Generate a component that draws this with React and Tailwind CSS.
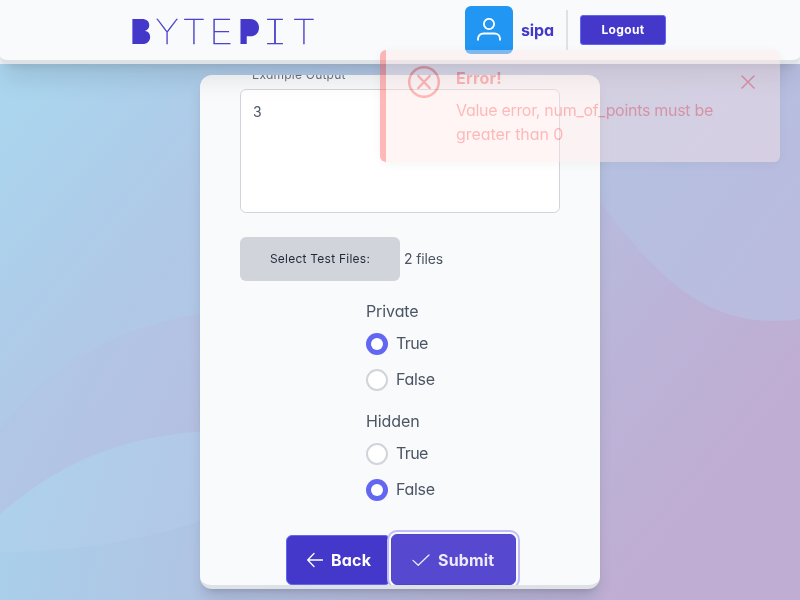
const inter = "font-['Inter',sans-serif] [font-feature-settings:'cv02','cv03','cv04','cv11']";

function Backdrop() {
  return (
    <svg className="absolute left-0 top-16 h-[536px] w-[800px]" viewBox="0 64 800 536" aria-hidden="true">
      <defs>
        <linearGradient id="base" gradientUnits="userSpaceOnUse" x1="20" y1="100" x2="620" y2="600">
          <stop offset="0" stopColor="#abd5ee" />
          <stop offset="0.14" stopColor="#adceea" />
          <stop offset="0.25" stopColor="#b0c9e7" />
          <stop offset="0.42" stopColor="#b2c6e6" />
          <stop offset="0.8" stopColor="#bbb4d8" />
          <stop offset="1" stopColor="#c0add3" />
        </linearGradient>
        <linearGradient id="band" gradientUnits="userSpaceOnUse" x1="40" y1="360" x2="200" y2="430">
          <stop offset="0" stopColor="#b2c5e4" />
          <stop offset="1" stopColor="#b6bddf" />
        </linearGradient>
        <linearGradient id="left" gradientUnits="userSpaceOnUse" x1="0" y1="480" x2="210" y2="540">
          <stop offset="0" stopColor="#aed1eb" />
          <stop offset="1" stopColor="#b3c7e7" />
        </linearGradient>
        <linearGradient id="low" gradientUnits="userSpaceOnUse" x1="0" y1="560" x2="210" y2="600">
          <stop offset="0" stopColor="#a9cfea" />
          <stop offset="1" stopColor="#b1c3e3" />
        </linearGradient>
        <linearGradient id="foot" gradientUnits="userSpaceOnUse" x1="200" y1="0" x2="600" y2="0">
          <stop offset="0" stopColor="#b1c3e3" />
          <stop offset="1" stopColor="#bbb1d6" />
        </linearGradient>
        <linearGradient id="right" gradientUnits="userSpaceOnUse" x1="600" y1="150" x2="800" y2="300">
          <stop offset="0" stopColor="#b5c0e0" />
          <stop offset="1" stopColor="#babbdf" />
        </linearGradient>
        <linearGradient id="top" gradientUnits="userSpaceOnUse" x1="200" y1="0" x2="600" y2="0">
          <stop offset="0" stopColor="#afcdea" />
          <stop offset="1" stopColor="#b5c0e0" />
        </linearGradient>
      </defs>
      <rect y="64" width="800" height="536" fill="url(#base)" />
      <path d="M0 430C45 370 110 325 210 313V600H0Z" fill="url(#band)" opacity="0.65" />
      <rect x="200" y="64" width="400" height="60" fill="url(#top)" />
      <path d="M590 64V190L600 202C660 280 710 332 800 319V64Z" fill="url(#right)" />
      <path d="M0 514C65 458 130 435 210 431V600H0Z" fill="url(#left)" />
      <path d="M0 552C70 552 140 542 210 518V600H0Z" fill="url(#low)" />
      <rect x="200" y="570" width="400" height="30" fill="url(#foot)" />
    </svg>
  );
}

function Thin({ children, className }) {
  return <span className={`flex justify-center font-thin [-webkit-text-stroke:0.35px_#4338ca] ${className}`}>{children}</span>;
}

function Logo() {
  return (
    <div className="ml-[131px] mt-[5px] flex h-[61px] w-[184px] items-center text-[34.5px] leading-none text-[#4338ca] [font-feature-settings:'ss02','cv08']">
      <span className="relative w-[21px] origin-left scale-x-[0.86] font-black">
        B
        <span className="absolute left-[7px] top-[9px] h-[17px] w-[9px] bg-[#4338ca]" />
      </span>
      <Thin className="ml-[5px] w-[20px] scale-x-105">Y</Thin>
      <Thin className="ml-[7px] w-[20px] scale-x-[1.12]">T</Thin>
      <Thin className="ml-[8px] w-[18px] scale-x-[1.2]">E</Thin>
      <span className="relative ml-[9px] w-[20px] origin-left scale-x-[0.92] font-black">
        P
        <span className="absolute left-[7px] top-[9px] h-[9px] w-[9px] bg-[#4338ca]" />
      </span>
      <Thin className="ml-[8px] w-[16px] scale-x-[1.7]">I</Thin>
      <Thin className="ml-[11px] w-[20px] scale-x-[1.12]">T</Thin>
    </div>
  );
}

function Header() {
  return (
    <header className="relative z-10 flex h-16 items-center rounded-b-lg border-b-4 border-[#dee2e6] bg-[#f8fafc] shadow-[0_20px_25px_-5px_rgba(0,0,0,0.1),0_8px_10px_-6px_rgba(0,0,0,0.1)] will-change-transform">
      <Logo />
      <div className="ml-[150px] flex h-12 w-12 items-center justify-center rounded-md bg-[#2196f3]">
        <svg viewBox="0 0 24 24" className="h-6 w-6" fill="none" stroke="#fff" strokeWidth="1.9" strokeLinecap="round">
          <circle cx="12" cy="6" r="5.1" />
          <path d="M1 21.8v-1c0-3.1 2.4-5.3 5.6-5.3h10.8c3.2 0 5.6 2.2 5.6 5.3v1" />
        </svg>
      </div>
      <span className="ml-2 w-[33px] text-base font-bold tracking-[-0.15px] text-[#4338ca]">sipa</span>
      <div className="ml-3 h-10 w-0.5 bg-[#dee2e6]" />
      <button className="ml-3 h-[30px] w-[86px] rounded-[3px] border border-[#6366f1] bg-[#4338ca] text-xs font-bold tracking-[0.35px] text-white">Logout</button>
    </header>
  );
}

function Option({ label, checked }) {
  return (
    <label className="flex h-[22px] items-center gap-2">
      <span className={checked
        ? "flex h-[22px] w-[22px] shrink-0 items-center justify-center rounded-full bg-[#6366f1]"
        : "h-[22px] w-[22px] shrink-0 rounded-full border-2 border-[#d1d5db] bg-white"}>
        {checked && <span className="h-3 w-3 rounded-full bg-white" />}
      </span>
      <span className={label === "True" ? "-mt-0.5 tracking-[-0.6px]" : "-mt-0.5 tracking-[-0.3px]"}>{label}</span>
    </label>
  );
}

function RadioGroup({ title, value }) {
  return (
    <div className="flex w-[68px] flex-col">
      <span className="h-6 leading-6 tracking-[-0.1px]">{title}</span>
      <div className="mt-[10px] flex flex-col gap-[14px]">
        <Option label="True" checked={value} />
        <Option label="False" checked={!value} />
      </div>
    </div>
  );
}

function FormCard() {
  return (
    <main className="mx-auto mt-[11px] h-[514px] w-[400px] overflow-hidden rounded-xl border-b-4 border-[#dee2e6] bg-[#f8fafc] px-10 text-base text-[#4b5563] shadow-[0_10px_15px_-3px_rgba(0,0,0,0.15),0_4px_6px_-4px_rgba(0,0,0,0.15)] will-change-transform">
      <div className="-mt-2 h-[22px] pl-3 text-xs leading-4 tracking-[0.22px] text-[#6b7280]">Example Output</div>
      <div className="h-[124px] rounded-md border border-[#d1d5db] bg-white px-3 py-3 text-sm leading-5">3</div>
      <div className="mt-6 flex h-11 items-center rounded-md bg-[#f9fafb]">
        <span className="flex h-11 w-40 items-center justify-center rounded-md bg-[#d1d5db] text-xs tracking-[0.24px] text-[#1f2937]">Select Test Files:</span>
        <span className="ml-1 text-sm tracking-[-0.15px]">2 files</span>
      </div>
      <div className="mt-[18px] flex flex-col items-center gap-[18px]">
        <RadioGroup title="Private" value={true} />
        <RadioGroup title="Hidden" value={false} />
      </div>
      <div className="ml-[46px] mt-[33px] flex w-[230px] items-start font-bold text-white">
        <button className="mt-px flex h-[50px] w-[105px] shrink-0 items-center rounded-md border border-[#6366f1] bg-[#4338ca] pl-5 tracking-[0.2px]">
          <svg viewBox="0 0 16 16" className="mr-2 h-4 w-4" fill="none" stroke="currentColor" strokeWidth="1.3" strokeLinecap="round" strokeLinejoin="round"><path d="M15.5 8H.7M7 1.5L.7 8L7 14.5" /></svg>
          Back
        </button>
        <button className="relative flex h-[51px] w-[125px] shrink-0 items-center rounded-md border border-[#4f46ce] bg-[#5649cf] pl-5 tracking-[0.15px] text-[#eeeafb] shadow-[0_0_0_2px_#f8fafc,0_0_0_4px_#c1bcfa]">
          <svg viewBox="0 0 18 16" className="mr-2 h-4 w-[18px]" fill="none" stroke="currentColor" strokeWidth="1.3" strokeLinecap="round" strokeLinejoin="round"><path d="M1 8.4L6.2 13.3L17 3" /></svg>
          Submit
        </button>
      </div>
    </main>
  );
}

function Toast() {
  return (
    <aside className="absolute left-[380px] top-[50px] z-20 flex h-28 w-[400px] rounded-md border-l-[6px] border-[#ff5757] bg-[#ffe7e6] px-[22px] py-4 text-base text-[#ff5757] opacity-[0.42] shadow-[0_2px_12px_rgba(0,0,0,0.1)]">
      <svg viewBox="0 0 32 32" className="h-8 w-8 shrink-0" fill="none" stroke="currentColor" strokeWidth="2.5" strokeLinecap="round">
        <circle cx="16" cy="16" r="14.8" /><path d="M10.3 10L21.7 22M21.7 10L10.3 22" />
      </svg>
      <div className="ml-4 w-[270px]">
        <div className="h-6 font-bold leading-6 tracking-[0.3px]">Error!</div>
        <div className="mt-2 leading-6 tracking-[-0.3px]">
          Value error, num_of_points must be <span className="tracking-[-0.06px]">greater than 0</span>
        </div>
      </div>
      <svg viewBox="0 0 14 14" className="ml-[15px] mt-[9px] h-[14px] w-[14px] shrink-0" fill="none" stroke="currentColor" strokeWidth="1.6" strokeLinecap="round"><path d="M1 1L13 13M13 1L1 13" /></svg>
    </aside>
  );
}

export default function App() {
  return (
    <div className={`relative h-[600px] w-[800px] overflow-hidden bg-[#f1f4fc] ${inter}`}>
      <Backdrop />
      <div className="relative">
        <Header />
        <FormCard />
      </div>
      <Toast />
    </div>
  );
}
